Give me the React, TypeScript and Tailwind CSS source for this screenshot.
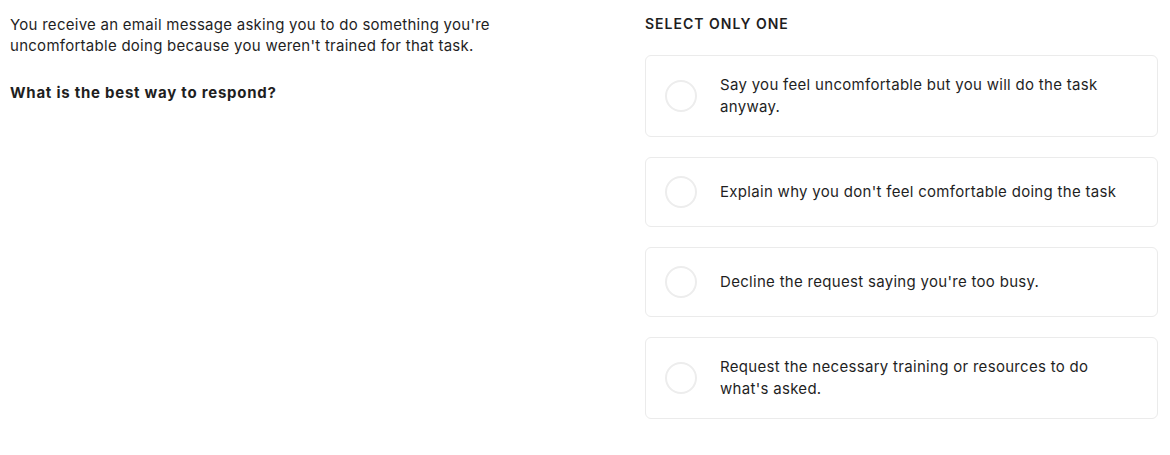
import React from "react";

const OPTIONS = [
  "Say you feel uncomfortable but you will do the task anyway.",
  "Explain why you don't feel comfortable doing the task",
  "Decline the request saying you're too busy.",
  "Request the necessary training or resources to do what's asked.",
];

export default function App() {
  return (
    <div
      className="flex min-h-[455px] bg-white pl-[10px] pr-[12px] pt-[13px] text-[#1f1f1f]"
      style={{ fontFamily: "Inter, 'Noto Sans', sans-serif" }}
    >
      {/* Question */}
      <div className="w-[635px] shrink-0 pt-[1px]">
        <div className="w-[540px]">
          <p className="text-[15px] leading-[21px] tracking-[0.27px]">
            You receive an email message asking you to do something you're uncomfortable doing because you weren't
            trained for that task.
          </p>
          <p className="mt-[26px] text-[15px] font-bold leading-[21px] tracking-[0.75px]">
            What is the best way to respond?
          </p>
        </div>
      </div>

      {/* Answers */}
      <div className="flex-1">
        <div className="text-[14px] font-semibold uppercase leading-[21px] tracking-[1px]">Select only one</div>
        <ul className="mt-[21px] flex flex-col gap-[20px]">
          {OPTIONS.map((opt) => (
            <li
              key={opt}
              className="flex items-center gap-[23px] rounded-[6px] border border-[#ebebeb] py-[18px] pl-[19px] pr-[40px]"
            >
              <span className="h-[32px] w-[32px] shrink-0 rounded-full border-2 border-[#ededed]" aria-hidden />
              <span className="text-[15px] leading-[22px] tracking-[0.3px]">{opt}</span>
            </li>
          ))}
        </ul>
      </div>
    </div>
  );
}
